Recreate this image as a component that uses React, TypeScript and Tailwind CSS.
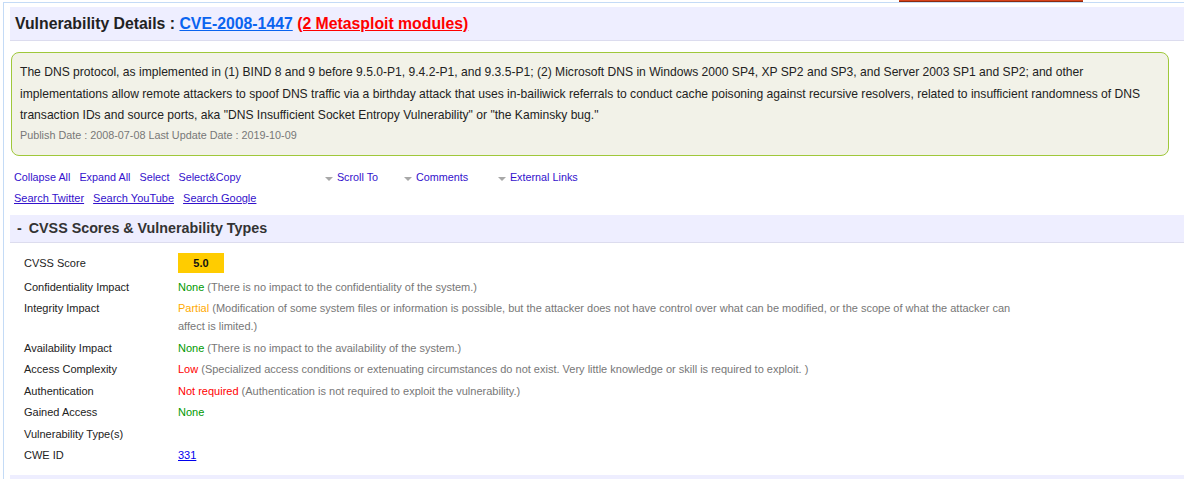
import React from 'react';

type Row = {
  label: string;
  value?: string;
  color?: string;
  note?: string;
};

const rows: Row[] = [
  { label: 'Confidentiality Impact', value: 'None', color: 'text-[#009900]', note: '(There is no impact to the confidentiality of the system.)' },
  {
    label: 'Integrity Impact',
    value: 'Partial',
    color: 'text-[#ffaa00]',
    note: '(Modification of some system files or information is possible, but the attacker does not have control over what can be modified, or the scope of what the attacker can affect is limited.)',
  },
  { label: 'Availability Impact', value: 'None', color: 'text-[#009900]', note: '(There is no impact to the availability of the system.)' },
  {
    label: 'Access Complexity',
    value: 'Low',
    color: 'text-[#ff0000]',
    note: '(Specialized access conditions or extenuating circumstances do not exist. Very little knowledge or skill is required to exploit. )',
  },
  { label: 'Authentication', value: 'Not required', color: 'text-[#ff0000]', note: '(Authentication is not required to exploit the vulnerability.)' },
  { label: 'Gained Access', value: 'None', color: 'text-[#009900]' },
  { label: 'Vulnerability Type(s)' },
];

const Caret: React.FC = () => (
  <span className="inline-block w-0 h-0 border-l-[4px] border-r-[4px] border-t-[4px] border-l-transparent border-r-transparent border-t-[#a8a8a8] mr-[4px] mt-[2px]" />
);

const App: React.FC = () => {
  return (
    <div className="min-h-screen bg-white text-[#222] font-['Liberation_Sans',Arial,sans-serif]">
      {/* top strip with cropped tab */}
      <div className="flex h-[2px]">
        <div className="w-[899px]" />
        <div className="w-[184px] bg-[#d8431c] border-b border-[#8a2a10]" />
      </div>

      <div className="ml-[3px] border-l border-t border-[#c4dbf6] pl-[6px] pt-[4px] pb-[20px]">
        {/* Title */}
        <div className="h-[34px] bg-[#eeeeff] border-b border-[#dcdcee] pl-[5px] flex items-center">
          <h1 className="text-[15.8px] font-bold text-[#222] leading-none">
            Vulnerability Details :{' '}
            <a href="#cve" className="text-[#0a64f0] underline">CVE-2008-1447</a>{' '}
            <a href="#msf" className="text-[#ff0000] underline">(2 Metasploit modules)</a>
          </h1>
        </div>

        {/* Summary */}
        <div className="mt-[11px] ml-[1px] mr-[15px] bg-[#f2f2e8] border border-[#9fc83a] rounded-[8px] pl-[8px] pr-[8px] pt-[9px] pb-[11.5px]">
          <div className="text-[12.1px] leading-[21.5px] text-[#222]">
            The DNS protocol, as implemented in (1) BIND 8 and 9 before 9.5.0-P1, 9.4.2-P1, and 9.3.5-P1; (2) Microsoft DNS in Windows 2000 SP4, XP SP2 and SP3, and Server 2003 SP1 and SP2; and other implementations allow remote attackers to spoof DNS traffic via a birthday attack that uses in-bailiwick referrals to conduct cache poisoning against recursive resolvers, related to insufficient randomness of DNS transaction IDs and source ports, aka "DNS Insufficient Socket Entropy Vulnerability" or "the Kaminsky bug."
          </div>
          <div className="text-[10.8px] leading-[17px] text-[#777]">
            Publish Date : 2008-07-08 Last Update Date : 2019-10-09
          </div>
        </div>

        {/* Actions */}
        <div className="mt-[11px] pl-[4px] text-[10.8px] leading-[21px] text-[#3311cc]">
          <div className="flex items-center">
            <a href="#c" className="mr-[9px]">Collapse All</a>
            <a href="#e" className="mr-[9px]">Expand All</a>
            <a href="#s" className="mr-[9px]">Select</a>
            <a href="#sc">Select&amp;Copy</a>
            <span className="ml-[84px] w-[79px] flex items-center">
              <Caret />
              Scroll To
            </span>
            <span className="w-[94px] flex items-center">
              <Caret />
              Comments
            </span>
            <span className="flex items-center">
              <Caret />
              External Links
            </span>
          </div>
          <div className="flex items-center text-[11px]">
            <a href="#t" className="underline mr-[9px]">Search Twitter</a>
            <a href="#y" className="underline mr-[9px]">Search YouTube</a>
            <a href="#g" className="underline">Search Google</a>
          </div>
        </div>

        {/* CVSS section */}
        <div className="mt-[6px] h-[28px] bg-[#eeeeff] border-b border-[#dcdcee] pl-[7px] flex items-center">
          <h2 className="text-[14.3px] font-bold text-[#333] leading-none">
            <span className="mr-[3px]">-</span> CVSS Scores &amp; Vulnerability Types
          </h2>
        </div>

        <div className="pt-[7px] pl-[14px] text-[11px] leading-[18px]">
          <div className="grid grid-cols-[154px_836px] py-[3px]">
            <div className="flex items-center">CVSS Score</div>
            <div>
              <span className="inline-flex items-center justify-center w-[46px] h-[20px] bg-[#ffcc00] font-bold text-[#111]">5.0</span>
            </div>
          </div>
          {rows.map((r) => (
            <div key={r.label} className="grid grid-cols-[154px_836px] py-[1.75px]">
              <div>{r.label}</div>
              <div>
                {r.value && <span className={r.color}>{r.value}</span>}
                {r.note && <span className="text-[#777]"> {r.note}</span>}
                {!r.value && '\u00a0'}
              </div>
            </div>
          ))}
          <div className="grid grid-cols-[154px_836px] py-[1.75px]">
            <div>CWE ID</div>
            <div>
              <a href="#cwe" className="text-[#0000ee] underline">331</a>
            </div>
          </div>
        </div>

        <div className="mt-[9px] h-[28px] bg-[#eeeeff]" />
      </div>
    </div>
  );
};

export default App;
